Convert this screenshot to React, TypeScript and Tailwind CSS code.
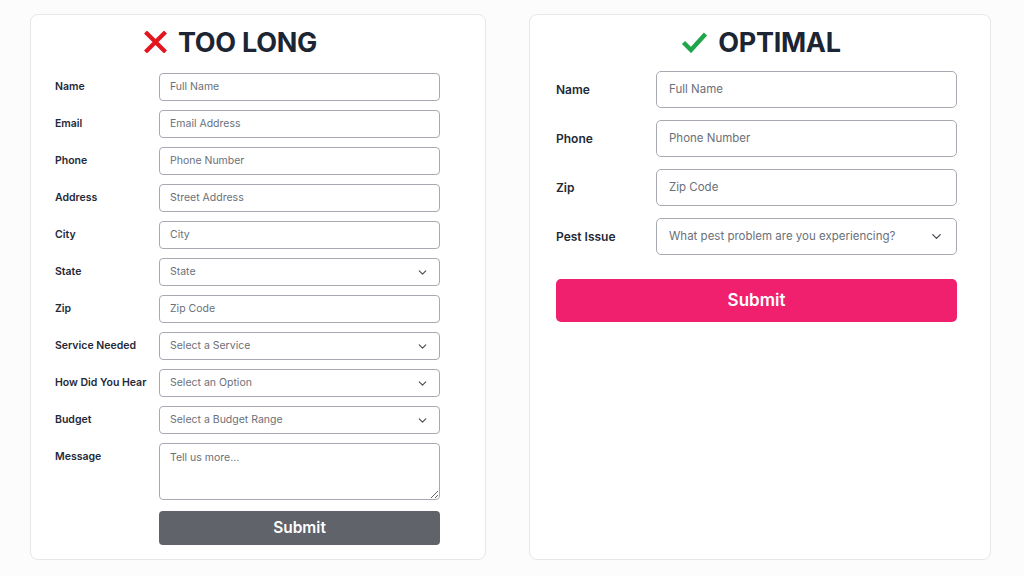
import { ChevronDown } from 'lucide-react';

interface Field {
  label: string;
  placeholder: string;
  select?: boolean;
}

const longFields: Field[] = [
  { label: 'Name', placeholder: 'Full Name' },
  { label: 'Email', placeholder: 'Email Address' },
  { label: 'Phone', placeholder: 'Phone Number' },
  { label: 'Address', placeholder: 'Street Address' },
  { label: 'City', placeholder: 'City' },
  { label: 'State', placeholder: 'State', select: true },
  { label: 'Zip', placeholder: 'Zip Code' },
  { label: 'Service Needed', placeholder: 'Select a Service', select: true },
  { label: 'How Did You Hear', placeholder: 'Select an Option', select: true },
  { label: 'Budget', placeholder: 'Select a Budget Range', select: true },
];

const shortFields: Field[] = [
  { label: 'Name', placeholder: 'Full Name' },
  { label: 'Phone', placeholder: 'Phone Number' },
  { label: 'Zip', placeholder: 'Zip Code' },
  { label: 'Pest Issue', placeholder: 'What pest problem are you experiencing?', select: true },
];

function CrossIcon() {
  return (
    <svg width="23" height="22" viewBox="0 0 23 22" className="shrink-0">
      <path d="M3 2.5 L20 19.5 M20 2.5 L3 19.5" stroke="#e3161f" strokeWidth="4.2" strokeLinecap="square" fill="none" />
    </svg>
  );
}

function CheckIcon() {
  return (
    <svg width="27" height="22" viewBox="0 0 27 22" className="shrink-0">
      <path d="M2.5 11.5 L10 19 L24.5 3" stroke="#1fa64a" strokeWidth="4.4" strokeLinejoin="miter" fill="none" />
    </svg>
  );
}

function App() {
  return (
    <div
      className="w-[1024px] h-[576px] bg-[#fcfcfc] flex gap-[43px] pl-[30px] pt-[14px] text-[#1f2937]"
      style={{ fontFamily: 'Inter, "Liberation Sans", sans-serif' }}
    >
      {/* Too long form */}
      <div className="w-[456px] h-[546px] bg-white border border-[#e6e7ea] rounded-lg pl-[24px] pt-[13px]">
        <div className="flex items-center gap-[11px] pl-[89px] h-[28px]">
          <CrossIcon />
          <span className="text-[27px] font-bold leading-none tracking-[-0.3px] text-[#1c2533]">TOO LONG</span>
        </div>
        <div className="flex flex-col gap-[9px] mt-[17px]">
          {longFields.map((f) => (
            <div key={f.label} className="flex items-center">
              <span className="w-[104px] text-[10.5px] font-semibold">{f.label}</span>
              <div className="w-[281px] h-[28px] border border-[#a7abb1] rounded-[4px] bg-white flex items-center justify-between pl-[10px] pr-[10px]">
                <span className="text-[10.5px] text-[#6b7079]">{f.placeholder}</span>
                {f.select && <ChevronDown size={13} strokeWidth={2.2} className="text-[#4b5058]" />}
              </div>
            </div>
          ))}
          <div className="flex items-start">
            <span className="w-[104px] h-[28px] flex items-center text-[10.5px] font-semibold">Message</span>
            <textarea
              placeholder="Tell us more..."
              className="w-[281px] h-[57px] border border-[#a7abb1] rounded-[4px] bg-white px-[10px] py-[6px] text-[10.5px] placeholder:text-[#6b7079] outline-none"
            />
          </div>
          <div className="flex mt-[2px]">
            <div className="w-[104px]" />
            <button className="w-[281px] h-[34px] bg-[#606369] rounded-[4px] text-white text-[15.5px] font-semibold">
              Submit
            </button>
          </div>
        </div>
      </div>

      {/* Optimal form */}
      <div className="w-[462px] h-[546px] bg-white border border-[#e6e7ea] rounded-lg pl-[26px] pt-[13px]">
        <div className="flex items-center justify-center gap-[10px] h-[28px] pr-[24px]">
          <CheckIcon />
          <span className="text-[27px] font-bold leading-none tracking-[-0.3px] text-[#1c2533]">OPTIMAL</span>
        </div>
        <div className="flex flex-col gap-[12px] mt-[15px]">
          {shortFields.map((f) => (
            <div key={f.label} className="flex items-center">
              <span className="w-[100px] text-[12px] font-semibold">{f.label}</span>
              <div className="w-[301px] h-[37px] border border-[#a7abb1] rounded-[5px] bg-white flex items-center justify-between pl-[12px] pr-[12px]">
                <span className="text-[11.5px] text-[#6b7079]">{f.placeholder}</span>
                {f.select && <ChevronDown size={15} strokeWidth={2.2} className="text-[#4b5058]" />}
              </div>
            </div>
          ))}
          <button className="w-[401px] h-[43px] mt-[12px] bg-[#f0206f] rounded-[5px] text-white text-[17px] font-semibold">
            Submit
          </button>
        </div>
      </div>
    </div>
  );
}

export default App;
